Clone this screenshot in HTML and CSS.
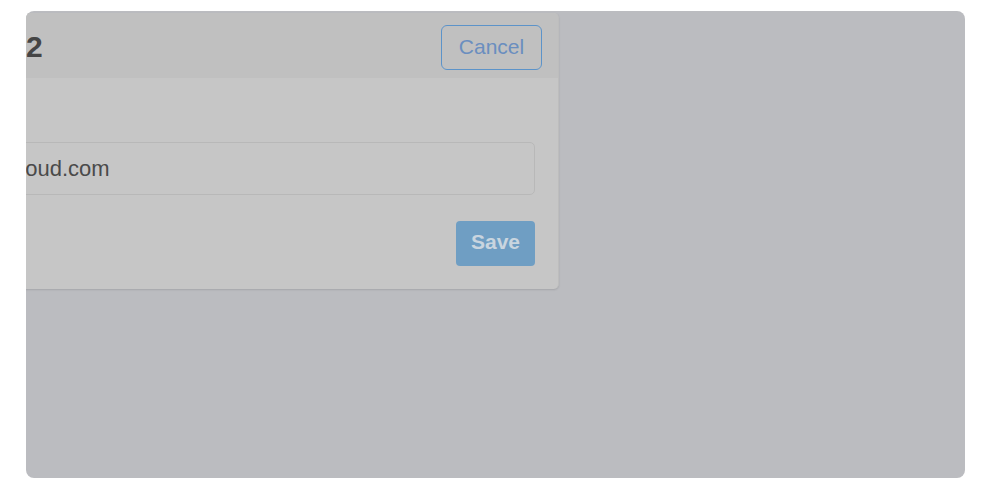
FILE: index.html
```html
<!DOCTYPE html>
<html lang="en">
<head>
  <meta charset="UTF-8" />
  <meta name="viewport" content="width=device-width, initial-scale=1.0"/>
  <title>Edit account</title>
  <link rel="stylesheet" href="styles.css">
</head>
<body>
  <div class="frame">
    <div class="dialog">
      <div class="dialog-header">
        <h2 class="dialog-title">2</h2>
        <button class="btn-cancel">Cancel</button>
      </div>
      <div class="dialog-body">
        <input type="text" class="field" value="jo@icloud.com">
        <div class="actions">
          <button class="btn-save">Save</button>
        </div>
      </div>
    </div>
  </div>
</body>
</html>
```

FILE: styles.css
```css
body {
  margin: 0;
  background: #fff;
  font-family: "Liberation Sans", Arial, sans-serif;
}

.frame {
  margin: 11px 0 0 26px;
  width: 939px;
  height: 467px;
  border-radius: 8px;
  background: #bbbcc0;
  overflow: hidden;
}

.dialog {
  margin: 2px 0 0 -83px;
  width: 615px;
  background: #c6c6c6;
  border-radius: 5px;
  box-shadow: 0 1px 2px rgba(0, 0, 0, 0.12);
  border-right: 1px solid #bdbdbd;
  overflow: hidden;
}

.dialog-header {
  display: flex;
  justify-content: space-between;
  align-items: flex-start;
  box-sizing: border-box;
  height: 65px;
  padding: 12px 16px 0 16px;
  background: #c0c0c0;
}

.dialog-title {
  margin: 5px 0 0 67px;
  font-size: 30px;
  font-weight: bold;
  color: #454545;
  line-height: 34px;
}

.btn-cancel {
  width: 101px;
  height: 45px;
  padding-bottom: 2px;
  border: 1.5px solid #5c93c9;
  border-radius: 6px;
  background: transparent;
  color: #6a8ebf;
  font-family: "Liberation Sans", Arial, sans-serif;
  font-size: 21px;
}

.dialog-body {
  padding: 64px 23px 23px 16px;
}

.field {
  display: block;
  box-sizing: border-box;
  width: 100%;
  height: 53px;
  padding: 0 5px;
  border: 1.5px solid #b8b8b8;
  border-radius: 5px;
  background: #c6c6c6;
  color: #4a4a4a;
  font-family: "Liberation Sans", Arial, sans-serif;
  font-size: 22px;
}

.actions {
  display: flex;
  justify-content: flex-end;
  margin-top: 26px;
}

.btn-save {
  width: 79px;
  height: 45px;
  padding-bottom: 4px;
  border: none;
  border-radius: 4px;
  background: #6f9ec3;
  color: #c9d5df;
  font-family: "Liberation Sans", Arial, sans-serif;
  font-size: 21px;
  font-weight: bold;
}
```
